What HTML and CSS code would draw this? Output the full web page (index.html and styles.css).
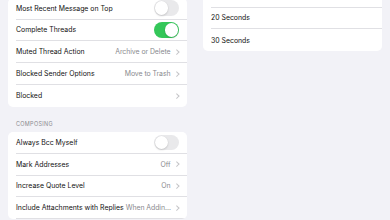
FILE: index.html
```html
<!DOCTYPE html>
<html lang="en">
<head>
    <meta charset="UTF-8">
    <meta name="viewport" content="width=device-width, initial-scale=1.0">
    <title>Mail Settings</title>
    <link rel="stylesheet" href="styles.css">
</head>
<body>
    <div class="split">
        <div class="pane primary">
            <ul class="group first">
                <li class="row">
                    <span class="label">Most Recent Message on Top</span>
                    <span class="switch"></span>
                </li>
                <li class="row">
                    <span class="label">Complete Threads</span>
                    <span class="switch on"></span>
                </li>
                <li class="row">
                    <span class="label">Muted Thread Action</span>
                    <span class="value">Archive or Delete</span>
                    <span class="chevron"></span>
                </li>
                <li class="row">
                    <span class="label">Blocked Sender Options</span>
                    <span class="value">Move to Trash</span>
                    <span class="chevron"></span>
                </li>
                <li class="row">
                    <span class="label">Blocked</span>
                    <span class="chevron"></span>
                </li>
            </ul>

            <h4 class="section-title">COMPOSING</h4>
            <ul class="group open">
                <li class="row">
                    <span class="label">Always Bcc Myself</span>
                    <span class="switch"></span>
                </li>
                <li class="row">
                    <span class="label">Mark Addresses</span>
                    <span class="value">Off</span>
                    <span class="chevron"></span>
                </li>
                <li class="row">
                    <span class="label">Increase Quote Level</span>
                    <span class="value">On</span>
                    <span class="chevron"></span>
                </li>
                <li class="row">
                    <span class="label">Include Attachments with Replies</span>
                    <span class="value">When Addin...</span>
                    <span class="chevron"></span>
                </li>
            </ul>
        </div>

        <div class="pane secondary">
            <ul class="group top">
                <li class="row">
                    <span class="label"></span>
                    <span class="chevron"></span>
                </li>
                <li class="row">
                    <span class="label">20 Seconds</span>
                </li>
                <li class="row">
                    <span class="label">30 Seconds</span>
                </li>
            </ul>
        </div>
    </div>
</body>
</html>
```

FILE: styles.css
```css
html, body {
    margin: 0;
    padding: 0;
    height: 100%;
    overflow: hidden;
}
body {
    font-family: Inter, "Liberation Sans", Arial, sans-serif;
    background-color: #f2f2f7;
    color: #000;
    -webkit-font-smoothing: antialiased;
}
.split {
    display: flex;
    height: 100%;
}
.pane {
    flex: none;
    width: 195px;
    min-width: 0;
    padding: 0 8px;
    box-sizing: border-box;
}
.group {
    list-style: none;
    margin: 0;
    padding: 0;
    background-color: #fff;
    border-radius: 5px;
    overflow: hidden;
}
.group.first {
    margin-top: -2.25px;
}
.group.top {
    margin-top: -14.25px;
}
.row {
    display: flex;
    align-items: center;
    height: 21.75px;
    margin-left: 8px;
    padding-right: 7px;
    box-sizing: border-box;
    border-bottom: 0.5px solid #e0e0e4;
    font-size: 6.9px;
    color: #111;
}
.row:last-child {
    border-bottom: none;
}
.group.open .row:last-child {
    border-bottom: 0.5px solid #e0e0e4;
}
.label {
    flex: 1 0 auto;
    white-space: nowrap;
}
.value {
    flex: none;
    color: #8a8a8e;
    white-space: nowrap;
    margin-left: 2px;
    letter-spacing: -0.05px;
}
.chevron {
    width: 2.5px;
    height: 2.5px;
    margin-left: 4.5px;
    margin-right: 1.5px;
    border-top: 0.9px solid #c4c4c7;
    border-right: 0.9px solid #c4c4c7;
    transform: rotate(45deg);
    flex: none;
}
.switch {
    position: relative;
    width: 25.5px;
    height: 15.5px;
    border-radius: 8px;
    background-color: #e9e9eb;
    flex: none;
    margin-right: 1px;
}
.switch::after {
    content: "";
    position: absolute;
    top: 1px;
    left: 1px;
    width: 13.5px;
    height: 13.5px;
    border-radius: 50%;
    background-color: #fff;
    box-shadow: 0 1px 2px rgba(0,0,0,0.15), 0 0 0 0.3px rgba(0,0,0,0.05);
}
.switch.on {
    background-color: #34c759;
}
.switch.on::after {
    left: 11px;
}
.section-title {
    margin: 0;
    padding: 13.5px 8px 4px 8px;
    line-height: 8px;
    font-size: 5.5px;
    font-weight: normal;
    color: #8a8a8e;
    letter-spacing: 0.3px;
}
```
